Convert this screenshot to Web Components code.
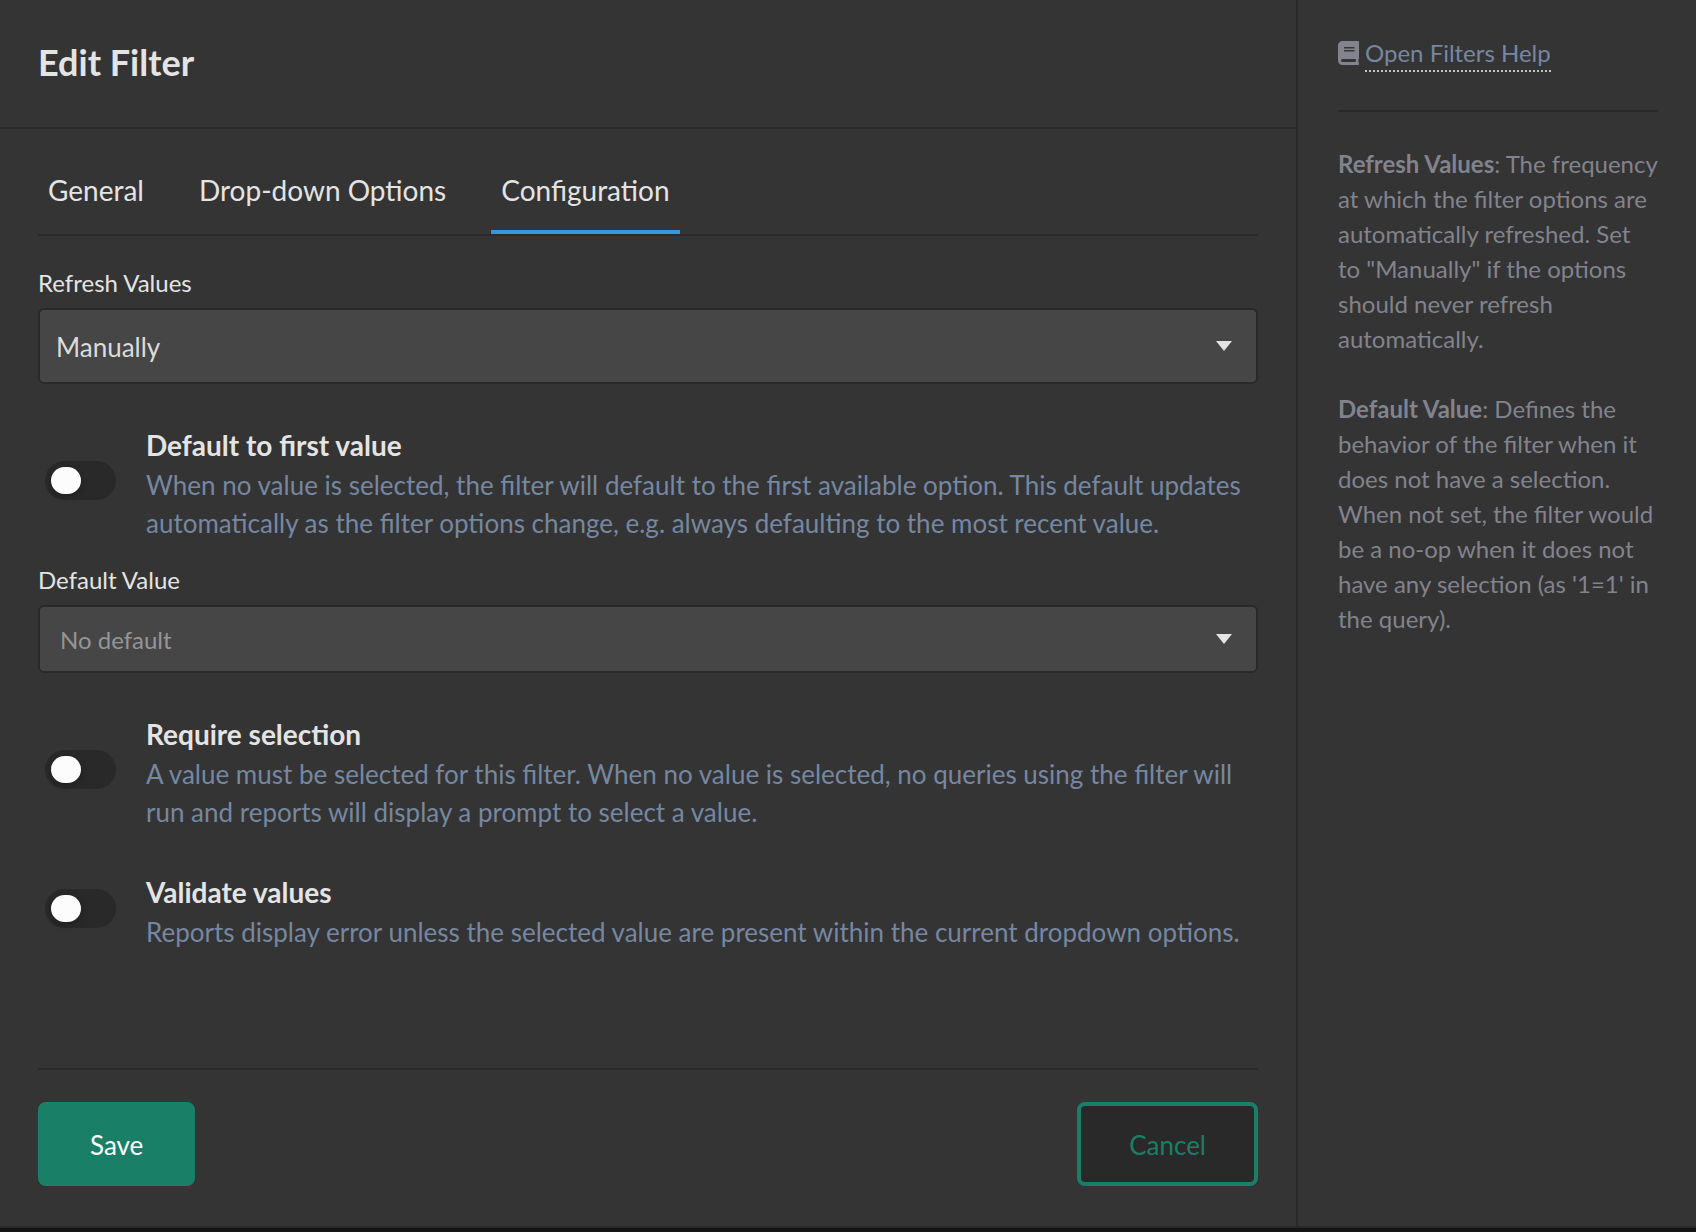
<!DOCTYPE html>
<html lang="en">
<head>
<meta charset="utf-8">
<title>Edit Filter</title>
<style>
  :root {
    --bg: #343434;
    --line: #292929;
    --field: #464646;
    --text: #e4e4e4;
    --muted: #7687a1;
    --help: #82838d;
    --green: #1a7f67;
    --blue: #3498e1;
  }
  * { box-sizing: border-box; }
  body {
    margin: 0;
    padding-bottom: 4px;
    min-height: 100vh;
    display: flex;
    background: #151515;
    color: var(--text);
    font-family: Lato, "Liberation Sans", sans-serif;
    font-size: 24px;
  }
</style>
</head>
<body>
<filter-dialog>
  <span slot="title">Edit Filter</span>
  <tab-bar slot="tabs">
    <tab-item>General</tab-item>
    <tab-item>Drop-down Options</tab-item>
    <tab-item selected>Configuration</tab-item>
  </tab-bar>
  <select-field label="Refresh Values" value="Manually"></select-field>
  <toggle-row>
    Default to first value
    <span slot="description">When no value is selected, the filter will default to the first available option. This default updates automatically as the filter options change, e.g. always defaulting to the most recent value.</span>
  </toggle-row>
  <select-field class="after-row" label="Default Value" value="No default" placeholder></select-field>
  <toggle-row>
    Require selection
    <span slot="description">A value must be selected for this filter. When no value is selected, no queries using the filter will run and reports will display a prompt to select a value.</span>
  </toggle-row>
  <toggle-row>
    Validate values
    <span slot="description">Reports display error unless the selected value are present within the current dropdown options.</span>
  </toggle-row>
  <action-button slot="actions" kind="primary">Save</action-button>
  <action-button slot="actions">Cancel</action-button>
  <help-panel slot="help">
    <help-entry><strong>Refresh Values</strong>: The frequency at which the filter options are automatically refreshed. Set to "Manually" if the options should never refresh automatically.</help-entry>
    <help-entry><strong>Default Value</strong>: Defines the behavior of the filter when it does not have a selection. When not set, the filter would be a no-op when it does not have any selection (as '1=1' in the query).</help-entry>
  </help-panel>
</filter-dialog>

<script>
  const define = (name, render) => {
    customElements.define(name, class extends HTMLElement {
      connectedCallback() {
        if (this.shadowRoot) return;
        const root = this.attachShadow({ mode: 'open' });
        root.innerHTML = '<style>*{box-sizing:border-box}:host{box-sizing:border-box}</style>' + render(this);
      }
    });
  };

  define('filter-dialog', () => `
    <style>
      :host { flex: 1; display: flex; background: var(--bg); border-bottom: 2px solid var(--line); }
      main { flex: 1; min-width: 0; display: flex; flex-direction: column; }
      header { padding: 40px 38px 43px; border-bottom: 2px solid var(--line); }
      h1 { margin: 0; font-size: 36px; line-height: 44px; font-weight: 700; }
      form { flex: 1; display: flex; flex-direction: column; padding: 42px 38px 40px; }
      .fields { display: flex; flex-direction: column; gap: 40px; padding: 30px 0 40px; }
      ::slotted(.after-row) { margin-top: -19px; }
      footer { margin-top: auto; padding-top: 32px; border-top: 2px solid var(--line);
               display: flex; justify-content: space-between; }
    </style>
    <main>
      <header><h1><slot name="title"></slot></h1></header>
      <form>
        <slot name="tabs"></slot>
        <div class="fields"><slot></slot></div>
        <footer><slot name="actions"></slot></footer>
      </form>
    </main>
    <slot name="help"></slot>`);

  define('tab-bar', () => `
    <style>
      :host { display: block; }
      nav { display: flex; gap: 35px; border-bottom: 2px solid var(--line); }
    </style>
    <nav role="tablist"><slot></slot></nav>`);

  define('tab-item', el => `
    <style>
      :host { display: block; }
      button { display: block; margin: 0; padding: 0 10px 21px; border: 0; border-bottom: 4px solid transparent;
               background: none; color: inherit; font: inherit; font-size: 28px; line-height: 38px; cursor: pointer; }
      button[aria-selected=true] { border-color: var(--blue); }
    </style>
    <button type="button" role="tab" aria-selected="${el.hasAttribute('selected')}"><slot></slot></button>`);

  define('select-field', el => `
    <style>
      :host { display: flex; flex-direction: column; gap: 8px; }
      label { font-size: 24px; line-height: 34px; }
      .box { display: grid; align-items: center; }
      select, svg { grid-area: 1 / 1; }
      select { appearance: none; width: 100%; height: 76px; margin: 0; padding: 2px 60px 0 16px;
               border: 2px solid var(--line); border-radius: 6px; background: var(--field);
               color: #dcdcdc; font: inherit; font-size: 26px; }
      :host([placeholder]) select { height: 68px; padding: 0 60px 0 20px; color: #959595; font-size: 24px; }
      svg { justify-self: end; margin-right: 26px; pointer-events: none; fill: var(--text); }
    </style>
    <label for="control">${el.getAttribute('label')}</label>
    <div class="box">
      <select id="control"><option>${el.getAttribute('value')}</option></select>
      <svg width="16" height="10" viewBox="0 0 16 10" aria-hidden="true"><path d="M0 0h16L8 10z"/></svg>
    </div>`);

  define('toggle-row', () => `
    <style>
      :host { display: flex; align-items: center; gap: 30px; padding-left: 7px; }
      input { appearance: none; flex: none; width: 71px; height: 39px; margin: 0 0 5px; padding: 6px;
              border-radius: 20px; background: var(--line); cursor: pointer; }
      input::before { content: ""; display: block; width: 30px; height: 27px; border-radius: 14px;
                      background: #fcfcfc; box-shadow: 0 2px 6px #0004; }
      input:checked { background: var(--green); }
      input:checked::before { margin-left: auto; }
      .text { flex: 1; min-width: 0; }
      label { display: block; font-size: 28px; line-height: 42px; font-weight: 700; }
      p { margin: 0; font-size: 26px; line-height: 38px; color: var(--muted); }
    </style>
    <input type="checkbox" id="control" role="switch" aria-describedby="about">
    <div class="text">
      <label for="control"><slot></slot></label>
      <p id="about"><slot name="description"></slot></p>
    </div>`);

  define('action-button', () => `
    <style>
      :host { display: block; }
      button { display: block; margin: 0; height: 84px; padding: 2px 48px 0; border: 4px solid var(--green);
               border-radius: 8px; background: var(--line); color: var(--green);
               font: inherit; font-size: 26px; line-height: 38px; cursor: pointer; }
      :host([kind=primary]) button { background: var(--green); color: #fff; }
    </style>
    <button type="button"><slot></slot></button>`);

  define('help-panel', () => `
    <style>
      :host { flex: none; display: block; width: 400px; padding: 35px 38px 35px 40px;
              border-left: 2px solid var(--line); color: var(--help); font-size: 24px; line-height: 35px; }
      .open { display: flex; align-items: flex-start; gap: 6px; padding-bottom: 38px; border-bottom: 2px solid var(--line); }
      svg { flex: none; margin-top: 6px; fill: currentColor; }
      a { color: var(--muted); text-decoration: none; border-bottom: 2px dotted #c4c4c4; }
      .entries { display: flex; flex-direction: column; gap: 35px; padding-top: 34px; }
    </style>
    <aside>
      <div class="open">
        <svg width="21" height="24" viewBox="0 0 448 512" aria-hidden="true"><path d="M448 360V24c0-13.3-10.7-24-24-24H96C43 0 0 43 0 96v320c0 53 43 96 96 96h328c13.3 0 24-10.7 24-24v-16c0-7.5-3.5-14.3-8.9-18.7-4.2-15.4-4.2-59.3 0-74.7 5.4-4.3 8.9-11.1 8.9-18.6zM128 134c0-3.3 2.7-6 6-6h212c3.3 0 6 2.7 6 6v20c0 3.3-2.7 6-6 6H134c-3.3 0-6-2.7-6-6v-20zm0 64c0-3.3 2.7-6 6-6h212c3.3 0 6 2.7 6 6v20c0 3.3-2.7 6-6 6H134c-3.3 0-6-2.7-6-6v-20zm253.4 250H96c-17.7 0-32-14.3-32-32 0-17.6 14.4-32 32-32h285.4c-1.9 17.1-1.9 46.9 0 64z"/></svg>
        <a href="#filters-help">Open Filters Help</a>
      </div>
      <div class="entries"><slot></slot></div>
    </aside>`);

  define('help-entry', () => `
    <style>
      :host { display: block; }
      p { margin: 0; }
    </style>
    <p><slot></slot></p>`);
</script>
</body>
</html>
